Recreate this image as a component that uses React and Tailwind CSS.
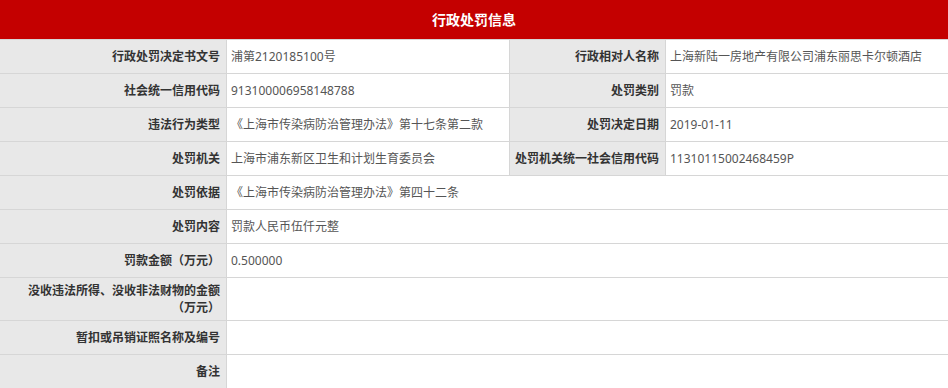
const font = { fontFamily: '"Noto Sans", "Noto Sans CJK SC", sans-serif' };

const pairRows = [
  ['行政处罚决定书文号', '浦第2120185100号', '行政相对人名称', '上海新陆一房地产有限公司浦东丽思卡尔顿酒店'],
  ['社会统一信用代码', '913100006958148788', '处罚类别', '罚款'],
  ['违法行为类型', '《上海市传染病防治管理办法》第十七条第二款', '处罚决定日期', '2019-01-11'],
  ['处罚机关', '上海市浦东新区卫生和计划生育委员会', '处罚机关统一社会信用代码', '11310115002468459P'],
];

const wideRows = [
  ['处罚依据', '《上海市传染病防治管理办法》第四十二条'],
  ['处罚内容', '罚款人民币伍仟元整'],
  ['罚款金额（万元）', '0.500000'],
  [
    <>
      没收违法所得、没收非法财物的金额
      <br />
      （万元）
    </>,
    '',
    true,
  ],
  ['暂扣或吊销证照名称及编号', ''],
  ['备注', ''],
];

function Label({ children, className = '' }) {
  return (
    <div
      className={`flex shrink-0 items-center justify-end border-r border-[#d6d6d6] bg-[#e8e8e8] pr-[6px] pl-1 text-right font-bold leading-[17px] text-[#333] ${className}`}
    >
      <span>{children}</span>
    </div>
  );
}

function Value({ children, className = '' }) {
  return <div className={`flex items-center pl-[4px] text-[#555] ${className}`}>{children}</div>;
}

export default function App() {
  return (
    <div className="w-[948px] bg-white text-[12px]" style={font}>
      <div className="flex h-[39px] items-center justify-center bg-[#c40000] text-[14px] font-bold text-white">
        行政处罚信息
      </div>
      {pairRows.map(function (row) {
        return (
          <div key={row[0]} className="flex h-[34px] border-t border-[#d6d6d6]">
            <Label className="w-[227px]">{row[0]}</Label>
            <Value className="w-[283px] border-r border-[#d6d6d6]">{row[1]}</Value>
            <Label className="w-[156px]">{row[2]}</Label>
            <Value className="flex-1">{row[3]}</Value>
          </div>
        );
      })}
      {wideRows.map(function (row, i) {
        return (
          <div key={i} className={`flex border-t border-[#d6d6d6] ${row[2] ? 'h-[43px]' : 'h-[34px]'}`}>
            <Label className="w-[227px]">{row[0]}</Label>
            <Value className="flex-1">{row[1]}</Value>
          </div>
        );
      })}
    </div>
  );
}
